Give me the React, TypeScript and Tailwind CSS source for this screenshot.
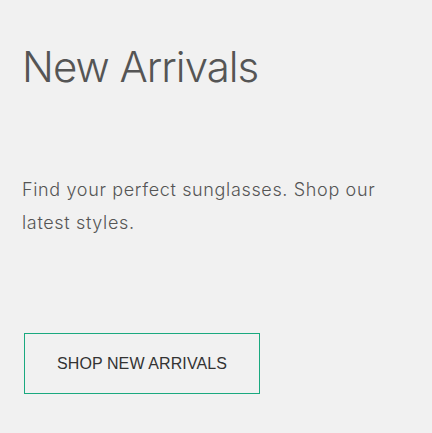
export default function App() {
  return (
    <div className="min-h-screen bg-[#f1f1f1] px-[22px] pt-[46px] font-['Liberation_Sans',Arial,sans-serif]">
      {/* Heading */}
      <h1 className="font-['Inter',sans-serif] text-[42px] leading-none font-light tracking-[-1px] text-[#555555]">
        New Arrivals
      </h1>

      {/* Intro copy */}
      <p className="mt-[85px] max-w-[380px] font-['Inter',sans-serif] font-light text-[18px] leading-[33px] tracking-[0.65px] text-[#555555]">
        Find your perfect sunglasses. Shop our latest styles.
      </p>

      {/* CTA */}
      <button className="mt-[94px] ml-[2px] w-[236px] h-[61px] border border-[#1aa97f] bg-transparent text-[16px] tracking-[0.1px] text-[#333333] uppercase">
        Shop New Arrivals
      </button>
    </div>
  );
}
